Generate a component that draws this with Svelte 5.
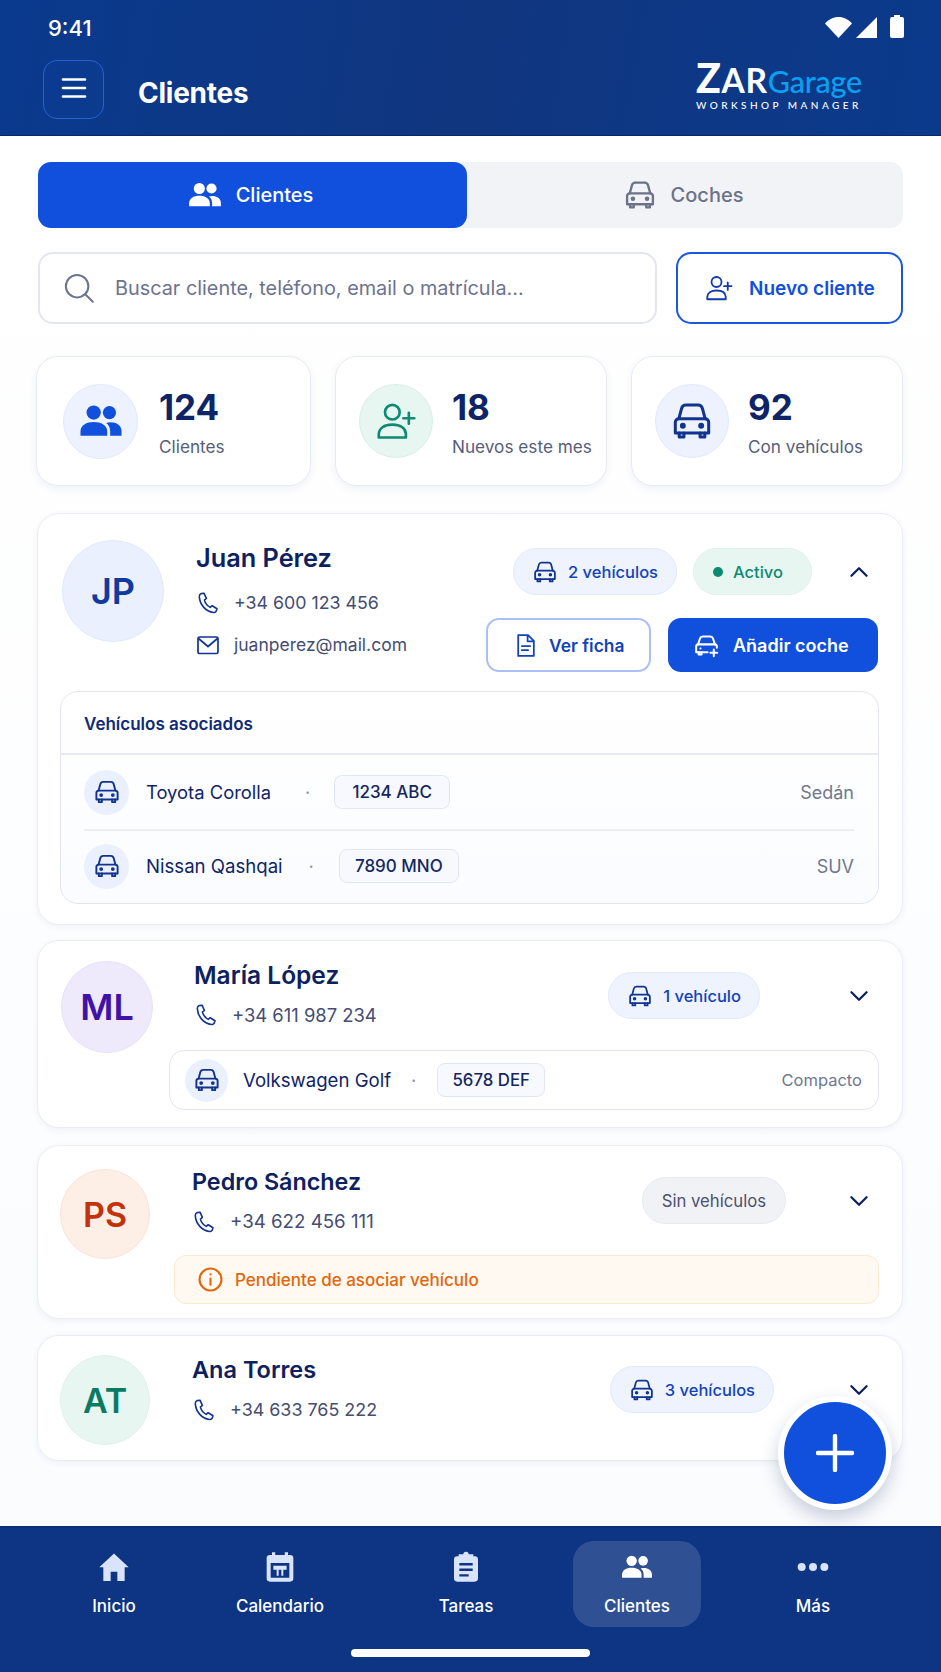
<script>
  const stats = [
    { value: "124", label: "Clientes", icon: "people", tone: "blue" },
    { value: "18", label: "Nuevos este mes", icon: "userplus", tone: "green" },
    { value: "92", label: "Con vehículos", icon: "car", tone: "navy" }
  ];
  const nav = [
    { label: "Inicio", icon: "home" },
    { label: "Calendario", icon: "calendar" },
    { label: "Tareas", icon: "tasks" },
    { label: "Clientes", icon: "people", active: true },
    { label: "Más", icon: "dots" }
  ];
</script>

{#snippet car()}
  <svg class="ico" viewBox="0 0 24 24" fill="none" stroke="currentColor" stroke-width="1.65" stroke-linecap="round" stroke-linejoin="round">
    <path d="M4.800 10.800 6.300 5.200A2.500 2.500 0 0 1 8.700 3.300h6.600a2.500 2.500 0 0 1 2.400 1.900l1.500 5.600" />
    <path d="M4.800 10.800h14.400A1.900 1.900 0 0 1 21.100 12.700v5.800H2.900v-5.800A1.900 1.900 0 0 1 4.800 10.800Z" />
    <path d="M5 18.500v2.200h2.600v-2.200M16.400 18.500v2.200H19v-2.200" />
    <circle cx="7" cy="14.600" r=".8" fill="currentColor" />
    <circle cx="17" cy="14.600" r=".8" fill="currentColor" />
  </svg>
{/snippet}

{#snippet carplus()}
  <svg class="ico" viewBox="0 0 24 24" fill="none" stroke="currentColor" stroke-width="1.8" stroke-linecap="round" stroke-linejoin="round">
    <path d="M4.500 11 6.200 5.800A2.600 2.600 0 0 1 8.700 4h6.600a2.600 2.600 0 0 1 2.500 1.800L19.500 11" />
    <path d="M13 18H2.800v-5A2 2 0 0 1 4.700 11h14.600a2 2 0 0 1 1.900 2v1" />
    <path d="M5 18v2h2.600v-2M6.600 14.600h.1M18.500 15.500v6M15.500 18.500h6" />
  </svg>
{/snippet}

{#snippet people()}
  <svg class="ico" viewBox="0 0 24 24" fill="currentColor">
    <circle cx="8" cy="7.400" r="3.900" />
    <circle cx="16.600" cy="7.400" r="3.600" />
    <path d="M.8 20v-2.200C.8 14.400 4 12.600 8 12.600s7.400 1.800 7.400 5.200V20Z" />
    <path d="M17 20v-2.400c0-1.900-.8-3.500-2.200-4.500.7-.3 1.500-.4 2.200-.4 3.400 0 6.200 1.700 6.200 4.800V20Z" />
  </svg>
{/snippet}

{#snippet userplus()}
  <svg class="ico" viewBox="0 0 24 24" fill="none" stroke="currentColor" stroke-width="1.450" stroke-linecap="round" stroke-linejoin="round">
    <circle cx="10" cy="7.200" r="4" />
    <path d="M2.600 21v-1.600c0-3.400 3-5.400 7.400-5.400s7.200 1.800 7.400 5V21ZM19 7.500v6M16 10.500h6" />
  </svg>
{/snippet}

{#snippet phone()}
  <svg class="ico" viewBox="0 0 24 24" fill="none" stroke="currentColor" stroke-width="1.600" stroke-linecap="round" stroke-linejoin="round">
    <path d="M5.200 2.600 8 2.200l2.400 5.200-2 1.700c.8 3 3 5.800 5.800 7.300l2-1.700 4.800 3-.8 2.500c-.5 1-1.500 1.500-2.700 1.300C9.500 20.400 3.800 13.500 3.300 5.600c0-1.400.7-2.500 1.900-3Z" />
  </svg>
{/snippet}

{#snippet chevron(up)}
  <svg class="chev" class:up viewBox="0 0 24 24" fill="none" stroke="currentColor" stroke-width="2.100" stroke-linecap="round" stroke-linejoin="round">
    <path d="m5 8.500 7 7 7-7" />
  </svg>
{/snippet}

{#snippet navicon(name)}
  {#if name === "home"}
    <svg class="ico" viewBox="0 0 24 24" fill="currentColor"><path d="M12 1.800 23 12.200h-3V22.500h-5.500v-7h-5v7H4V12.200H1Z" /></svg>
  {:else if name === "calendar"}
    <svg class="ico" viewBox="0 0 24 24" fill="currentColor">
      <path fill-rule="evenodd" d="M6 1h2.400v2h7.200V1H18v2h1.500A2.500 2.500 0 0 1 22 5.500v15a2.500 2.500 0 0 1-2.500 2.500h-15A2.500 2.500 0 0 1 2 20.500v-15A2.500 2.500 0 0 1 4.500 3H6Zm-1 8v11h14V9Zm2 2h10v3h-2.500v4.500h-1.500V14h-2v4.500H9.500V14H7Z" />
    </svg>
  {:else if name === "tasks"}
    <svg class="ico" viewBox="0 0 24 24" fill="currentColor">
      <path fill-rule="evenodd" d="M10 2.500a2 2 0 0 1 4 0h3.500V4h1A2.500 2.500 0 0 1 21 6.500v14a2.500 2.500 0 0 1-2.500 2.500h-13A2.500 2.500 0 0 1 3 20.500v-14A2.500 2.500 0 0 1 5.500 4h1V2.500ZM7 9v1.800h10V9Zm0 4.200V15h10v-1.800Zm0 4.200v1.800h7v-1.800Z" />
    </svg>
  {:else if name === "people"}
    {@render people()}
  {:else}
    <svg class="ico" viewBox="0 0 24 24" fill="currentColor"><circle cx="3.500" cy="12" r="3" /><circle cx="12" cy="12" r="3" /><circle cx="20.500" cy="12" r="3" /></svg>
  {/if}
{/snippet}

<div class="page">
  <header>
    <div class="status">
      <span class="time">9:41</span>
      <div class="status-icons">
        <svg width="27" height="21" viewBox="0 0 27 21" fill="#fff"><path d="M0 6.500C3.500 2.400 8.200 0 13.500 0S23.500 2.400 27 6.500L13.500 21Z" /></svg>
        <svg width="21" height="21" viewBox="0 0 21 21" fill="#fff"><path d="M21 0v21H0Z" /></svg>
        <svg class="batt" width="14" height="23" viewBox="0 0 14 23" fill="#fff"><path d="M4 0h6v2h2a2 2 0 0 1 2 2v17a2 2 0 0 1-2 2H2a2 2 0 0 1-2-2V4a2 2 0 0 1 2-2h2Z" /></svg>
      </div>
    </div>
    <div class="toolbar">
      <button class="menu" aria-label="Menú">
        <svg width="26" height="22" viewBox="0 0 26 22" stroke="#fff" stroke-width="2.600" stroke-linecap="round"><path d="M2 2.500h22M2 11h22M2 19.500h22" /></svg>
      </button>
      <h1>Clientes</h1>
      <div class="logo">
        <div class="logo-main"><span class="zar"><b>Z</b>AR</span><span class="garage">Garage</span></div>
        <div class="logo-sub">WORKSHOP MANAGER</div>
      </div>
    </div>
  </header>

  <main>
    <div class="tabs">
      <div class="tab on">{@render people()}<span>Clientes</span></div>
      <div class="tab">{@render car()}<span>Coches</span></div>
    </div>

    <div class="tools">
      <div class="search">
        <svg class="ico" viewBox="0 0 24 24" fill="none" stroke="currentColor" stroke-width="1.600" stroke-linecap="round"><circle cx="10.500" cy="10.500" r="9" /><path d="m17 17 6 6" /></svg>
        <span>Buscar cliente, teléfono, email o matrícula...</span>
      </div>
      <button class="new">{@render userplus()}<span>Nuevo cliente</span></button>
    </div>

    <div class="stats">
      {#each stats as s}
        <div class="stat">
          <div class="stat-icon {s.tone}">
            {#if s.icon === "people"}{@render people()}{:else if s.icon === "userplus"}{@render userplus()}{:else}{@render car()}{/if}
          </div>
          <div>
            <div class="num">{s.value}</div>
            <div class="lbl">{s.label}</div>
          </div>
        </div>
      {/each}
    </div>

    <section class="card juan">
      <div class="juan-top">
        <div class="avatar jp">JP</div>
        <div class="info">
          <h2>Juan Pérez</h2>
          <div class="line">{@render phone()}<span>+34 600 123 456</span></div>
          <div class="line">
            <svg class="ico" viewBox="0 0 24 24" fill="none" stroke="currentColor" stroke-width="1.700" stroke-linejoin="round"><rect x="2" y="4" width="20" height="16.500" rx="1.500" /><path d="m2.500 5.500 9.500 8 9.500-8" /></svg>
            <span class="mail">juanperez@mail.com</span>
          </div>
        </div>
        <div class="juan-side">
          <div class="side">
            <div class="pill veh">{@render car()}<span>2 vehículos</span></div>
            <div class="pill active"><i></i><span>Activo</span></div>
            {@render chevron(true)}
          </div>
          <div class="actions">
            <button class="ghost">
              <svg class="ico" viewBox="0 0 24 24" fill="none" stroke="currentColor" stroke-width="1.700" stroke-linecap="round" stroke-linejoin="round"><path d="M5 2h9.500L20 7.500V22H5ZM14 2.500V8h5.500M8.500 12.500h8M8.500 16.500h6" /></svg>
              <span>Ver ficha</span>
            </button>
            <button class="solid">{@render carplus()}<span>Añadir coche</span></button>
          </div>
        </div>
      </div>

      <div class="panel">
        <div class="panel-head">Vehículos asociados</div>
        <div class="row first">
          <div class="row-icon">{@render car()}</div>
          <span class="model">Toyota Corolla</span><span class="dot">·</span><span class="plate">1234 ABC</span>
          <span class="kind">Sedán</span>
        </div>
        <div class="row second">
          <div class="row-icon">{@render car()}</div>
          <span class="model">Nissan Qashqai</span><span class="dot">·</span><span class="plate">7890 MNO</span>
          <span class="kind">SUV</span>
        </div>
      </div>
    </section>

    <section class="card person maria">
      <div class="avatar ml">ML</div>
      <div class="top">
        <div class="info">
          <h2>María López</h2>
          <div class="line">{@render phone()}<span>+34 611 987 234</span></div>
        </div>
        <div class="pill veh">{@render car()}<span>1 vehículo</span></div>
        {@render chevron(false)}
      </div>
      <div class="single">
        <div class="row-icon">{@render car()}</div>
        <span class="model">Volkswagen Golf</span><span class="dot">·</span><span class="plate">5678 DEF</span>
        <span class="kind small">Compacto</span>
      </div>
    </section>

    <section class="card person pedro">
      <div class="avatar ps">PS</div>
      <div class="top">
        <div class="info">
          <h2>Pedro Sánchez</h2>
          <div class="line">{@render phone()}<span>+34 622 456 111</span></div>
        </div>
        <div class="pill none"><span>Sin vehículos</span></div>
        {@render chevron(false)}
      </div>
      <div class="alert">
        <svg class="ico" viewBox="0 0 24 24" fill="none" stroke="currentColor" stroke-width="2" stroke-linecap="round"><circle cx="12" cy="12" r="10.500" /><path d="M12 11v6M12 7v.2" /></svg>
        <span>Pendiente de asociar vehículo</span>
      </div>
    </section>

    <section class="card person ana">
      <div class="avatar at">AT</div>
      <div class="top">
        <div class="info">
          <h2>Ana Torres</h2>
          <div class="line">{@render phone()}<span>+34 633 765 222</span></div>
        </div>
        <div class="pill veh">{@render car()}<span>3 vehículos</span></div>
        {@render chevron(false)}
      </div>
    </section>

    <button class="fab" aria-label="Añadir">
      <svg width="38" height="38" viewBox="0 0 38 38" stroke="#fff" stroke-width="4.400" stroke-linecap="round"><path d="M19 2v34M2 19h34" /></svg>
    </button>
  </main>

  <nav>
    <div class="nav-items">
      {#each nav as n}
        <div class="nav-item" class:active={n.active}>
          {@render navicon(n.icon)}
          <span>{n.label}</span>
        </div>
      {/each}
    </div>
    <div class="home-bar"></div>
  </nav>
</div>

<style>
  :global(body) {
    margin: 0;
    background: #fff;
  }

  .page {
    width: 941px;
    height: 1672px;
    display: flex;
    flex-direction: column;
    overflow: hidden;
    font-family: Inter, "Liberation Sans", sans-serif;
    color: #0f2467;
  }

  .ico {
    display: block;
    flex: none;
  }

  button {
    font: inherit;
    cursor: pointer;
  }

  /* header */
  header {
    height: 136px;
    box-sizing: border-box;
    flex: none;
    background: linear-gradient(100deg, #0a3a8e, #10367f 50%, #0b3a8c);
    border-bottom: 1px solid #07296b;
    box-shadow: 0 3px 6px rgba(15, 36, 103, 0.12);
    color: #fff;
    position: relative;
  }

  .status {
    height: 54px;
    padding: 15px 37px 0 48px;
    box-sizing: border-box;
    display: flex;
    justify-content: space-between;
    align-items: flex-start;
  }

  .time {
    font-size: 22px;
    font-weight: 500;
    line-height: 26px;
  }

  .status-icons {
    display: flex;
    align-items: flex-start;
    gap: 4px;
    padding-top: 2px;
  }

  .batt {
    margin: -2px 0 0 9px;
  }

  .toolbar {
    display: flex;
    align-items: center;
    padding: 6px 79px 0 43px;
  }

  .menu {
    width: 61px;
    height: 59px;
    border: 1px solid #2a5fd0;
    border-radius: 14px;
    background: rgba(20, 70, 170, 0.12);
    display: flex;
    align-items: center;
    justify-content: center;
    padding: 0 0 4px;
  }

  h1 {
    margin: 6px 0 0 34px;
    font-size: 28px;
    font-weight: 700;
    flex: 1;
    letter-spacing: -0.25px;
  }

  .logo {
    font-family: Lato, "Open Sans", sans-serif;
    margin-top: -8px;
  }

  .logo-main {
    line-height: 36px;
    font-size: 30.5px;
    white-space: nowrap;
  }

  .zar {
    font-size: 33.5px;
    font-weight: 700;
    letter-spacing: 0.7px;
  }

  .zar b {
    font-size: 41px;
  }

  .garage {
    color: #0aa0f0;
    font-weight: 500;
    letter-spacing: -0.2px;
  }

  .logo-sub {
    font-size: 10px;
    letter-spacing: 3.45px;
    font-weight: 500;
    line-height: 12px;
    white-space: nowrap;
  }

  /* main */
  main {
    flex: 1;
    position: relative;
    padding: 26px 38px 0;
    background: linear-gradient(#fff, #fbfcfe);
    display: flex;
    flex-direction: column;
  }

  .tabs {
    height: 66px;
    display: flex;
    background: #f2f3f7;
    border-radius: 13px;
    font-size: 20px;
    font-weight: 500;
  }

  .tab {
    flex: 436;
    display: flex;
    align-items: center;
    justify-content: center;
    gap: 14px;
    color: #6c7288;
    padding-right: 4px;
  }

  .tab .ico {
    width: 34px;
    height: 34px;
  }

  .tab.on {
    flex: 429;
    background: #1050dc;
    color: #fff;
    border-radius: 13px;
  }

  .tools {
    display: flex;
    gap: 19px;
    margin-top: 24px;
  }

  .search {
    flex: 1;
    height: 72px;
    box-sizing: border-box;
    border: 2px solid #e4e6ef;
    border-radius: 15px;
    background: #fff;
    display: flex;
    align-items: center;
    gap: 21px;
    padding-left: 24px;
    color: #6c7390;
    font-size: 19.85px;
  }

  .search .ico {
    width: 30px;
    height: 30px;
  }

  .new {
    width: 227px;
    height: 72px;
    box-sizing: border-box;
    border: 2px solid #1a57dd;
    border-radius: 15px;
    background: #fff;
    color: #1050dc;
    font-size: 19px;
    font-weight: 600;
    display: flex;
    align-items: center;
    gap: 15px;
    padding: 0 0 0 26px;
    white-space: nowrap;
  }

  .new .ico {
    width: 30px;
    height: 30px;
    color: #0f3aa8;
  }

  .stats {
    display: flex;
    gap: 24px;
    margin: 32px 0 0 -2px;
  }

  .stat {
    flex: 1 1 0;
    height: 130px;
    box-sizing: border-box;
    background: #fff;
    border: 1px solid #e9ebf3;
    border-radius: 22px;
    box-shadow: 0 3px 8px rgba(30, 50, 120, 0.07);
    display: flex;
    align-items: center;
    gap: 21px;
    padding-left: 26px;
  }

  .stat:nth-child(n + 2) {
    gap: 19px;
    padding-left: 23px;
  }

  .stat:nth-child(n + 2) .stat-icon {
    width: 74px;
    height: 74px;
  }

  .stat-icon {
    width: 75px;
    height: 75px;
    border-radius: 50%;
    display: flex;
    align-items: center;
    justify-content: center;
    background: #edf2fe;
    border: 1px solid #e2e9fb;
    box-sizing: border-box;
    flex: none;
  }

  .stat-icon .ico {
    width: 44px;
    height: 44px;
  }

  .stat-icon.blue {
    color: #1050dc;
  }

  .stat-icon.green {
    background: #e8f6f2;
    border-color: #d8efe8;
    color: #0e8a72;
  }

  .stat-icon.navy {
    color: #12348f;
  }

  .num {
    font-size: 35px;
    font-weight: 700;
    line-height: 44px;
    color: #0d2566;
    margin-top: 1px;
  }

  .lbl {
    font-size: 17.2px;
    line-height: 22px;
    color: #565d7c;
    margin-top: 7px;
    white-space: nowrap;
  }

  /* client cards */
  .card {
    background: #fff;
    border: 1px solid #ebedf4;
    border-radius: 22px;
    box-shadow: 0 2px 7px rgba(30, 50, 120, 0.06);
    box-sizing: border-box;
  }

  .juan {
    height: 412px;
    margin: 27px 0 0 -1px;
    padding: 26px 24px 0 24px;
  }

  .juan-top {
    display: flex;
    height: 151px;
  }

  .avatar {
    width: 102px;
    height: 102px;
    border-radius: 50%;
    display: flex;
    align-items: center;
    justify-content: center;
    font-size: 36px;
    font-weight: 600;
    flex: none;
    box-sizing: border-box;
    border: 1px solid transparent;
  }

  .jp {
    background: #eaf0fe;
    border-color: #e2e9fc;
    color: #123a9c;
  }

  .ml {
    background: #eee9fb;
    border-color: #e8e2f9;
    color: #3e13a6;
  }

  .ps {
    background: #fdeee6;
    border-color: #fbe3d7;
    color: #c2330c;
  }

  .at {
    background: #e7f6f1;
    border-color: #def1ea;
    color: #0b7a64;
  }

  .juan .info {
    margin-left: 32px;
    flex: 1;
    padding-top: 1px;
  }

  h2 {
    margin: 0;
    font-size: 25.3px;
    line-height: 34px;
    font-weight: 600;
    color: #0d2160;
    white-space: nowrap;
  }

  .line {
    display: flex;
    align-items: center;
    gap: 14px;
    color: #454d72;
    font-size: 17.8px;
    line-height: 24px;
    margin-top: 16px;
    white-space: nowrap;
  }

  .line .ico {
    width: 24px;
    height: 24px;
    color: #12348f;
  }

  .line + .line {
    margin-top: 18px;
  }

  .mail {
    font-size: 17.5px;
  }

  .juan-side {
    display: flex;
    flex-direction: column;
    align-items: flex-end;
  }

  .side {
    display: flex;
    align-items: center;
    margin-top: 8px;
  }

  .pill {
    height: 47px;
    box-sizing: border-box;
    border-radius: 24px;
    display: flex;
    align-items: center;
    gap: 10px;
    font-size: 16.5px;
    font-weight: 500;
    white-space: nowrap;
    flex: none;
  }

  .pill.veh {
    background: #eef3fe;
    border: 1px solid #e1e9fb;
    color: #1343b8;
    padding: 0 18px;
  }

  .pill.veh .ico {
    width: 26px;
    height: 26px;
    color: #12348f;
  }

  .pill.active {
    margin-left: 16px;
    background: #e8f6f2;
    border: 1px solid #def1eb;
    color: #0e8a72;
    padding: 0 28px 0 19px;
  }

  .pill.active i {
    width: 10px;
    height: 10px;
    background: #0e8a72;
    border-radius: 50%;
  }

  .pill.none {
    background: #f1f2f6;
    border: 1px solid #e9eaf0;
    color: #4a5070;
    padding: 0 19px;
    font-size: 16.7px;
    font-weight: 400;
  }

  .chev {
    width: 26px;
    height: 26px;
    color: #0d2160;
    margin: 0 6px 0 34px;
    flex: none;
  }

  .chev.up {
    transform: rotate(180deg);
  }

  .actions {
    display: flex;
    gap: 17px;
    margin-top: 23px;
  }

  .actions button {
    height: 54px;
    box-sizing: border-box;
    border-radius: 13px;
    display: flex;
    align-items: center;
    gap: 13px;
    font-size: 18px;
    font-weight: 600;
    white-space: nowrap;
  }

  .ghost {
    width: 165px;
    border: 2px solid #a8c0f5;
    background: #fff;
    color: #1343b8;
    padding: 0 0 0 25px;
  }

  .actions .ghost {
    font-size: 17.4px;
    gap: 11px;
  }

  .ghost .ico {
    width: 25px;
    height: 25px;
  }

  .solid {
    width: 210px;
    border: 0;
    background: #1050dc;
    color: #fff;
    padding: 0 0 0 25px;
  }

  .solid .ico {
    width: 27px;
    height: 27px;
  }

  .panel {
    height: 213px;
    box-sizing: border-box;
    border: 1.5px solid #e3e6f1;
    border-radius: 18px;
    background: linear-gradient(#fff, #fbfcff);
    margin: 0 -1px 0 -2px;
  }

  .panel-head {
    height: 63px;
    box-sizing: border-box;
    border-bottom: 2px solid #e6e8f3;
    padding: 3px 23px 0;
    display: flex;
    align-items: center;
    font-size: 17px;
    font-weight: 600;
    color: #0f2a78;
  }

  .row {
    height: 70px;
    display: flex;
    align-items: center;
    margin: 0 24px 0 23px;
    font-size: 18.4px;
  }

  .row.first {
    border-bottom: 2px solid #eceef5;
    height: 76px;
    box-sizing: border-box;
  }

  .row-icon {
    width: 45px;
    height: 45px;
    border-radius: 50%;
    background: #eaf0fe;
    display: flex;
    align-items: center;
    justify-content: center;
    color: #12348f;
    flex: none;
    margin-right: 17px;
  }

  .row-icon .ico {
    width: 28px;
    height: 28px;
  }

  .model {
    color: #0f2467;
    white-space: nowrap;
  }

  .dot {
    color: #8d94ae;
    margin: 0 24px 0 34px;
  }

  .row.second .model {
    font-size: 18.6px;
  }

  .row.second .dot {
    margin: 0 25px 0 26px;
  }

  .plate {
    height: 34px;
    box-sizing: border-box;
    border: 1px solid #e1e6f5;
    background: #f7f9fe;
    border-radius: 8px;
    padding: 0 17px;
    display: flex;
    align-items: center;
    font-size: 17px;
    font-weight: 450;
    color: #15265f;
    white-space: nowrap;
  }

  .row.second .plate {
    padding: 0 15px;
  }

  .kind {
    margin-left: auto;
    color: #70778f;
    font-size: 18px;
  }

  .person {
    display: grid;
    margin: 15px 0 0 -1px;
  }

  .person .avatar {
    grid-row: 1 / span 2;
    width: 92px;
    height: 92px;
    font-size: 36px;
  }

  .person .top {
    display: flex;
    align-items: flex-start;
  }

  .person .info {
    flex: 1;
    min-width: 0;
    margin-top: -3px;
  }

  .person .line {
    margin-top: 11px;
  }

  .person .chev {
    align-self: flex-start;
  }

  .maria {
    height: 188px;
    grid-template-columns: 92px 1fr;
    column-gap: 16px;
    padding: 20px 23px 0 23px;
    grid-template-rows: 89px 60px;
  }

  .maria h2 {
    font-size: 24.5px;
  }

  .maria .line {
    font-size: 18.4px;
  }

  .maria .top {
    padding-left: 25px;
  }

  .maria .pill {
    margin-top: 11px;
  }

  .maria .chev {
    margin: 22px 7px 0 86px;
  }

  .single {
    height: 60px;
    box-sizing: border-box;
    border: 1.5px solid #e3e6f1;
    border-radius: 15px;
    display: flex;
    align-items: center;
    padding: 0 16px 0 15px;
    font-size: 18.6px;
  }

  .single .row-icon {
    width: 43px;
    height: 43px;
    margin-right: 15px;
  }

  .single .dot {
    margin: 0 21px 0 20px;
  }

  .single .plate {
    padding: 0 14px;
    font-size: 16.8px;
  }

  .kind.small {
    font-size: 16.5px;
  }

  .pedro {
    height: 174px;
    margin-top: 17px;
    grid-template-columns: 90px 1fr;
    column-gap: 24px;
    padding: 22px 23px 0 22px;
    grid-template-rows: 87px 49px;
  }

  .pedro h2 {
    font-size: 23.3px;
  }

  .pedro .line {
    font-size: 18.7px;
  }

  .pedro .avatar,
  .ana .avatar {
    width: 90px;
    height: 90px;
    font-size: 34px;
  }

  .pedro .avatar {
    margin-top: 1px;
  }

  .pedro .top {
    padding-left: 18px;
  }

  .pedro .pill {
    margin-top: 9px;
  }

  .pedro .chev {
    margin: 20px 7px 0 60px;
  }

  .alert {
    height: 49px;
    box-sizing: border-box;
    background: #fff9f1;
    border: 1px solid #fbe9cf;
    border-radius: 12px;
    display: flex;
    align-items: center;
    gap: 12px;
    padding-left: 23px;
    color: #e2660a;
    font-size: 17px;
    font-weight: 500;
  }

  .alert .ico {
    width: 25px;
    height: 25px;
  }

  .ana {
    height: 126px;
    margin-top: 16px;
    grid-template-columns: 90px 1fr;
    column-gap: 42px;
    padding: 19px 23px 0 22px;
  }

  .ana .info {
    margin-top: -2px;
  }

  .ana h2 {
    font-size: 23.5px;
  }

  .ana .line {
    font-size: 17.9px;
  }

  .ana .pill {
    margin-top: 11px;
  }

  .ana .chev {
    margin: 22px 7px 0 72px;
  }

  .fab {
    position: absolute;
    left: 778px;
    bottom: 16px;
    width: 114px;
    height: 114px;
    border-radius: 50%;
    background: #1050dc;
    border: 6px solid #fff;
    box-shadow: 0 8px 18px rgba(20, 40, 100, 0.22);
    display: flex;
    align-items: center;
    justify-content: center;
    padding: 0;
  }

  /* bottom nav */
  nav {
    height: 146px;
    flex: none;
    box-sizing: border-box;
    background: #0d3583;
    border-top: 2px solid #0a2f78;
    position: relative;
  }

  .nav-items {
    display: flex;
    padding: 13px 0 0 50px;
  }

  .nav-item {
    width: 128px;
    height: 86px;
    border-radius: 21px;
    display: flex;
    flex-direction: column;
    align-items: center;
    color: #fff;
    font-size: 17px;
    font-weight: 500;
    padding-top: 10px;
    box-sizing: border-box;
    gap: 13px;
  }

  .nav-item:nth-child(2) {
    margin-left: 38px;
  }

  .nav-item:nth-child(3) {
    margin-left: 58px;
  }

  .nav-item:nth-child(4) {
    margin-left: 43px;
  }

  .nav-item:nth-child(5) {
    margin-left: 48px;
  }

  .nav-item .ico {
    width: 32px;
    height: 32px;
    color: #d9e3fb;
  }

  .nav-item.active {
    background: rgba(255, 255, 255, 0.14);
  }

  .nav-item.active .ico {
    color: #fff;
  }

  .home-bar {
    position: absolute;
    left: 351px;
    bottom: 15px;
    width: 239px;
    height: 8.5px;
    border-radius: 4px;
    background: #fff;
  }
</style>
